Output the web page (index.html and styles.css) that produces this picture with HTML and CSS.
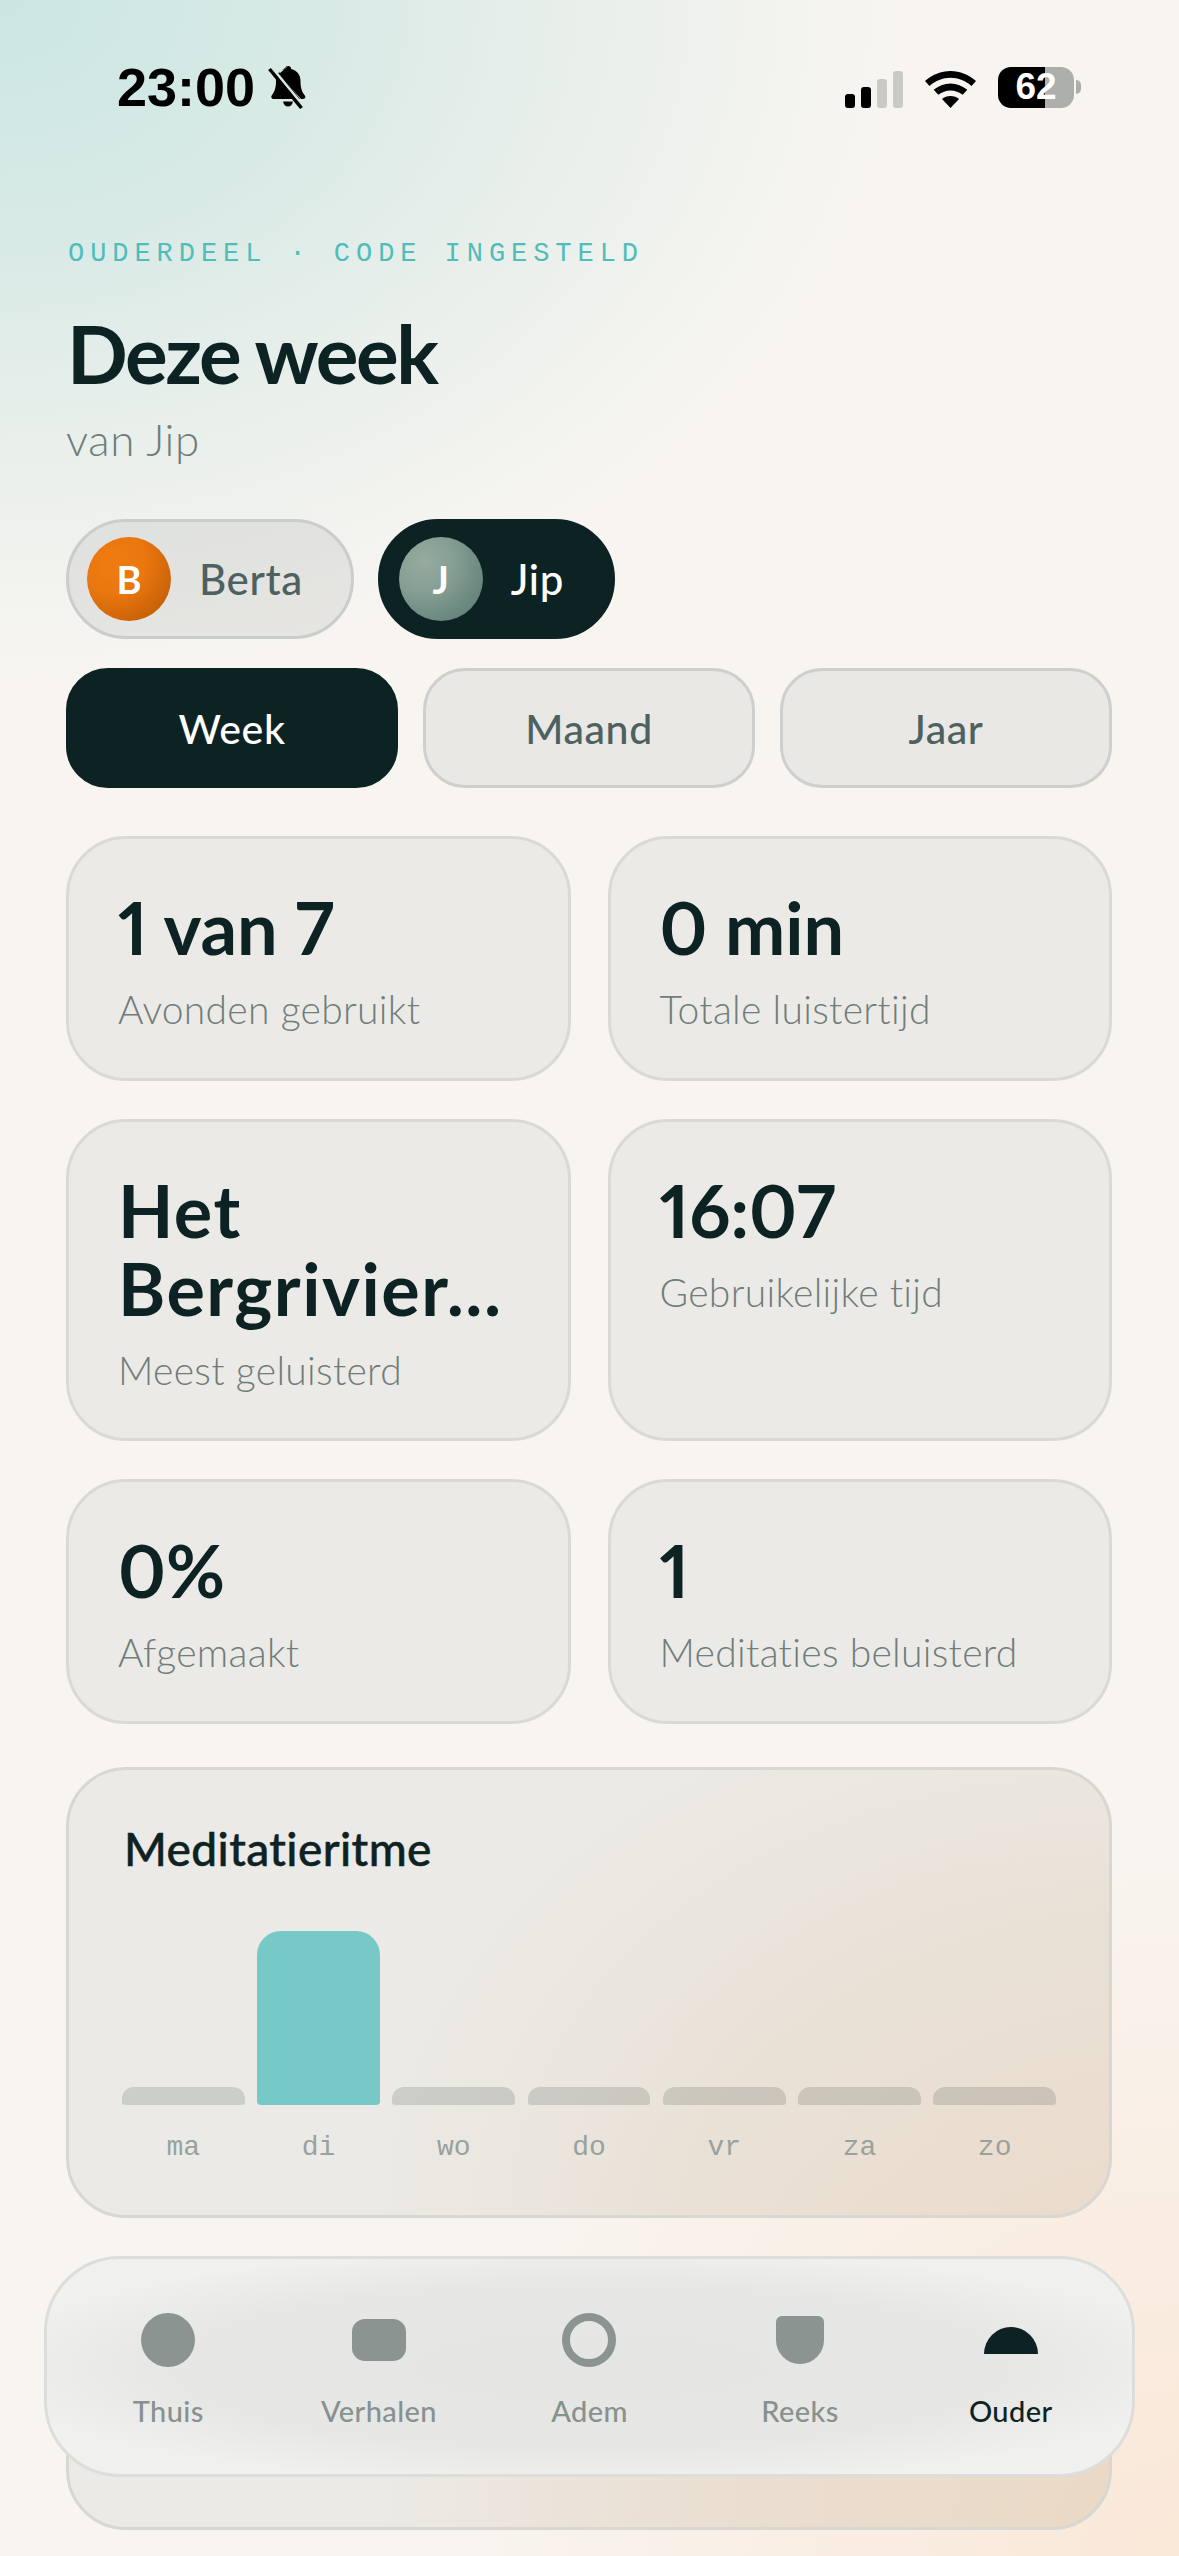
FILE: index.html
```html
<!DOCTYPE html>
<html lang="nl">
<head>
<meta charset="utf-8">
<title>Deze week</title>
<link rel="stylesheet" href="styles.css">
</head>
<body>
<div class="screen">

  <div class="status">
    <div class="status-left">
      <span class="time">23:00</span>
      <svg class="bell" viewBox="0 0 40 44" width="40" height="44">
        <path d="M20 1c-2 0-3 1.300-3.200 3C10.500 5.500 8 10.500 8 16c0 7-1.500 11-4 14-1.500 2-.5 4 2 4h26L11 7" fill="#000"/>
        <path d="M11 9l22 25h2c2.300 0 3-2 1.700-3.700C34 27 32.500 23 32.500 16c0-5.500-3-10.500-9.300-12C23 2 22 1 20 1z" fill="#000"/>
        <path d="M15 36.500h10c-.5 3-2.500 5-5 5s-4.500-2-5-5z" fill="#000"/>
        <path d="M4 3l32 39" stroke="#d8e8e4" stroke-width="3"/>
        <path d="M1.500 4l32 39" stroke="#000" stroke-width="3.500"/>
      </svg>
    </div>
    <div class="status-right">
      <div class="signal">
        <i class="sig sig1"></i><i class="sig sig2"></i><i class="sig sig3 off"></i><i class="sig sig4 off"></i>
      </div>
      <svg class="wifi" viewBox="0 0 51 37" width="51" height="37">
        <path d="M25.500 0C16 0 7.300 3.700 0 10l4.500 5C10.500 9.800 17.700 6.800 25.500 6.800S40.500 9.800 46.500 15l4.500-5C43.700 3.700 35 0 25.500 0z" fill="#000"/>
        <path d="M25.500 12.500c-6.300 0-12 2.400-16.800 6.300l4.600 5c3.500-2.700 7.700-4.400 12.200-4.400s8.700 1.700 12.200 4.400l4.600-5c-4.800-3.900-10.500-6.300-16.800-6.300z" fill="#000"/>
        <path d="M25.500 25c-3.300 0-6.300 1.200-8.500 3.100L25.500 37 34 28.100C31.800 26.200 28.800 25 25.500 25z" fill="#000"/>
      </svg>
      <div class="battery"><span>62</span></div>
      <i class="nub"></i>
    </div>
  </div>

  <div class="content">
    <div class="eyebrow">OUDERDEEL · CODE INGESTELD</div>
    <h1 class="title">Deze week</h1>
    <div class="subtitle">van Jip</div>

    <div class="kids">
      <div class="pill">
        <span class="avatar av-b">B</span><span class="pill-name">Berta</span>
      </div>
      <div class="pill pill-on">
        <span class="avatar av-j">J</span><span class="pill-name">Jip</span>
      </div>
    </div>

    <div class="tabs">
      <div class="tab tab-on">Week</div>
      <div class="tab">Maand</div>
      <div class="tab">Jaar</div>
    </div>

    <div class="stats">
      <div class="card">
        <div class="val">1 van 7</div>
        <div class="lab">Avonden gebruikt</div>
      </div>
      <div class="card">
        <div class="val">0 min</div>
        <div class="lab">Totale luistertijd</div>
      </div>
      <div class="card">
        <div class="val val-long">Het<br>Bergrivier...</div>
        <div class="lab">Meest geluisterd</div>
      </div>
      <div class="card">
        <div class="val">16:07</div>
        <div class="lab">Gebruikelijke tijd</div>
      </div>
      <div class="card">
        <div class="val">0%</div>
        <div class="lab">Afgemaakt</div>
      </div>
      <div class="card">
        <div class="val">1</div>
        <div class="lab">Meditaties beluisterd</div>
      </div>
    </div>

    <div class="chart">
      <h2 class="chart-title">Meditatieritme</h2>
      <div class="bars">
        <div class="day"><div class="bar"></div><span>ma</span></div>
        <div class="day"><div class="bar bar-on"></div><span>di</span></div>
        <div class="day"><div class="bar"></div><span>wo</span></div>
        <div class="day"><div class="bar"></div><span>do</span></div>
        <div class="day"><div class="bar"></div><span>vr</span></div>
        <div class="day"><div class="bar"></div><span>za</span></div>
        <div class="day"><div class="bar"></div><span>zo</span></div>
      </div>
    </div>

    <div class="chart chart-next"></div>
  </div>

  <div class="nav">
    <div class="nav-item"><div class="ico"><i class="ico-thuis"></i></div><span>Thuis</span></div>
    <div class="nav-item"><div class="ico"><i class="ico-verhalen"></i></div><span>Verhalen</span></div>
    <div class="nav-item"><div class="ico"><i class="ico-adem"></i></div><span>Adem</span></div>
    <div class="nav-item"><div class="ico"><i class="ico-reeks"></i></div><span>Reeks</span></div>
    <div class="nav-item nav-on"><div class="ico"><i class="ico-ouder"></i></div><span>Ouder</span></div>
  </div>

</div>
</body>
</html>
```

FILE: styles.css
```css
* { box-sizing: border-box; }
html, body { margin: 0; padding: 0; }
body { font-family: "Lato", "Noto Sans", sans-serif; color: #0d2223; font-variant-numeric: proportional-nums; }

.screen {
  position: relative;
  width: 1179px;
  height: 2556px;
  overflow: hidden;
  background:
    radial-gradient(ellipse 900px 680px at 0 0, #cbe6e2 0%, #d8eae6 35%, rgba(225,236,232,.65) 65%, rgba(248,245,241,0) 100%),
    radial-gradient(ellipse 760px 760px at 100% 100%, #fae8d8 0%, rgba(250,235,222,.75) 45%, rgba(248,245,241,0) 100%),
    #f8f5f1;
}

/* status bar */
.status {
  height: 243px;
  padding: 65px 98px 0 117px;
  display: flex;
  justify-content: space-between;
  align-items: flex-start;
}
.status-left { display: flex; align-items: center; gap: 13px; }
.time {
  font-family: "Liberation Sans", sans-serif;
  font-weight: 700;
  font-size: 54px;
  line-height: 44px;
  color: #000;
}
.status-right { display: flex; align-items: center; height: 44px; }
.signal { display: flex; align-items: flex-end; gap: 6px; height: 37px; margin-top: 4px; }
.sig { display: block; width: 10px; border-radius: 3px; background: #000; }
.sig1 { height: 14px; }
.sig2 { height: 21px; }
.sig3 { height: 29px; }
.sig4 { height: 37px; }
.sig.off { background: #c9c9c6; }
.wifi { margin: 4px 22px 0 22px; }
.battery {
  width: 76px;
  height: 41px;
  border-radius: 13px;
  background: linear-gradient(90deg, #000 0 62%, #acafac 62% 100%);
  display: flex;
  align-items: center;
  justify-content: center;
  font-family: "Liberation Sans", sans-serif;
  font-weight: 700;
  font-size: 37px;
  color: #fff;
}
.nub { display: block; width: 5px; height: 14px; margin-left: 2px; border-radius: 0 7px 7px 0; background: #acafac; }

.content { padding: 0 67px 0 66px; }

.eyebrow {
  font-family: "Liberation Mono", monospace;
  font-size: 27px;
  line-height: 22px;
  letter-spacing: 5.950px;
  color: #4fbdb9;
  padding-left: 2px;
}
.title {
  margin: 43px 0 0 1px;
  font-size: 80px;
  line-height: 90px;
  font-weight: 700;
  letter-spacing: -2.400px;
}
.subtitle {
  margin: 16px 0 0 0;
  font-size: 44px;
  line-height: 50px;
  font-weight: 300;
  letter-spacing: .6px;
  color: #6f7d7b;
}

.kids { display: flex; gap: 24px; margin-top: 55px; }
.pill {
  height: 120px;
  border: 3px solid #c9cdcb;
  border-radius: 60px;
  background: rgba(13, 34, 35, .07);
  padding: 0 48px 0 18px;
  display: flex;
  align-items: center;
  gap: 28px;
}
.pill-on { background: #0d2223; border-color: #0d2223; }
.avatar {
  width: 84px;
  height: 84px;
  border-radius: 50%;
  display: flex;
  align-items: center;
  justify-content: center;
  color: #fff;
  font-size: 38px;
  font-weight: 700;
}
.av-b { background: radial-gradient(circle at 32% 30%, #f07c10 0%, #e9760f 40%, #b55503 100%); }
.av-j { background: radial-gradient(circle at 30% 30%, #97ab9e 0%, #869f94 35%, #55776f 100%); }
.pill-name { font-size: 42px; font-weight: 500; letter-spacing: .6px; color: #4c6160; }
.pill-on .pill-name { color: #fff; }

.tabs { display: grid; grid-template-columns: repeat(3, 1fr); gap: 25px; margin-top: 29px; }
.tab {
  height: 120px;
  border: 3px solid #cdd0ce;
  border-radius: 42px;
  background: rgba(13, 34, 35, .06);
  display: flex;
  align-items: center;
  justify-content: center;
  font-size: 41px;
  font-weight: 500;
  letter-spacing: .6px;
  color: #4c6160;
}
.tab-on { background: #0d2223; border-color: #0d2223; color: #fff; }

.stats { display: grid; grid-template-columns: 1fr 1fr; gap: 38px 37px; margin-top: 48px; }
.card {
  border: 3px solid #dad9d5;
  border-radius: 60px;
  background: rgba(13, 34, 35, .05);
  padding: 49px 20px 45px 49px;
  min-height: 245px;
}
.val { font-size: 72px; line-height: 78px; font-weight: 700; color: #0d2223; }
.val-long { letter-spacing: 1.500px; }
.lab { margin-top: 20px; font-size: 39px; line-height: 46px; font-weight: 300; letter-spacing: .3px; color: #6f7d7b; }

.chart {
  height: 451px;
  margin-top: 43px;
  padding: 53px 53px 0 53px;
  border: 3px solid #d8d7d2;
  border-radius: 60px;
  background:
    radial-gradient(ellipse 760px 560px at 100% 100%, rgba(220,190,150,.19) 0%, rgba(220,190,150,.16) 55%, rgba(220,190,150,0) 100%),
    rgba(13, 34, 35, .05);
}
.chart-title { margin: 0 0 0 2px; font-size: 46px; line-height: 52px; font-weight: 500; letter-spacing: .4px; -webkit-text-stroke: .5px #0d2223; }
.bars { display: flex; gap: 12.500px; margin-top: 56px; }
.day { flex: 1; display: flex; flex-direction: column; justify-content: flex-end; height: 240px; align-items: stretch; }
.bar { height: 18px; border-radius: 12px 12px 3px 3px; background: rgba(13, 34, 35, .14); }
.bar-on { height: 174px; border-radius: 24px 24px 4px 4px; background: #76c9c6; }
.day span {
  height: 66px;
  padding-top: 29px;
  text-align: center;
  font-family: "Liberation Mono", monospace;
  font-size: 28px;
  line-height: 28px;
  color: #98a29f;
}
.chart-next { height: 272px; margin-top: 40px; }

/* tab bar, sits over the page */
.nav {
  position: absolute;
  left: 44px;
  top: 2256px;
  width: 1091px;
  height: 221px;
  padding: 54px 16px 0;
  display: grid;
  grid-template-columns: repeat(5, 1fr);
  border: 3px solid #dcdedb;
  border-radius: 76px;
  background:
    radial-gradient(ellipse 620px 120px at 50% 50%, #e5e5e4 0%, #e7e7e6 70%, rgba(240,240,238,.9) 100%),
    #f5f5f2;
}
.nav-item { display: flex; flex-direction: column; align-items: center; font-size: 29px; font-weight: 500; letter-spacing: .4px; color: #87928f; }
.nav-on { color: #0d2223; }
.ico { height: 54px; display: flex; align-items: center; justify-content: center; margin-bottom: 26px; }
.ico i { display: block; background: #8b9491; }
.ico-thuis { width: 54px; height: 54px; border-radius: 50%; }
.ico-verhalen { width: 54px; height: 42px; border-radius: 13px; }
.ico .ico-adem { width: 54px; height: 54px; border-radius: 50%; border: 8px solid #8b9491; background: none; }
.ico-reeks { width: 48px; height: 48px; border-radius: 6px 6px 24px 24px; }
.ico .ico-ouder { width: 54px; height: 27px; border-radius: 27px 27px 0 0; background: #0d2223; }
```
